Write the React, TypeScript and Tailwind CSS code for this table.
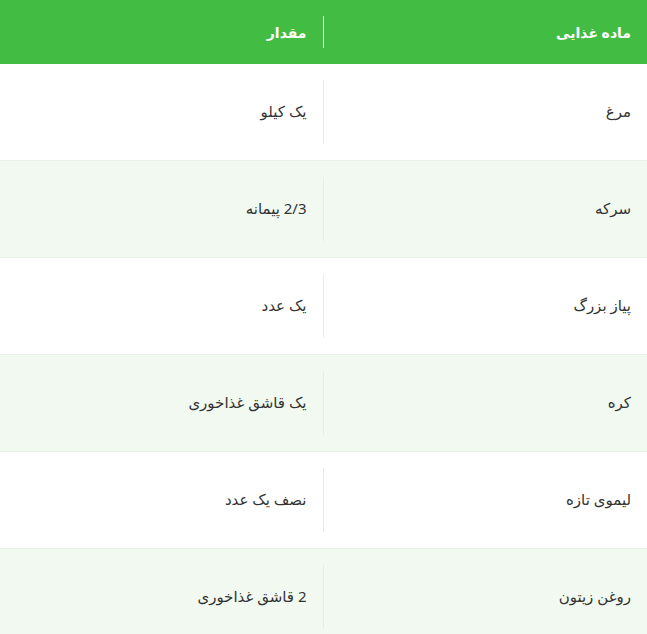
const ROWS = [
  { name: 'مرغ', amount: 'یک کیلو' },
  { name: 'سرکه', amount: '2/3 پیمانه' },
  { name: 'پیاز بزرگ', amount: 'یک عدد' },
  { name: 'کره', amount: 'یک قاشق غذاخوری' },
  { name: 'لیموی تازه', amount: 'نصف یک عدد' },
  { name: 'روغن زیتون', amount: '2 قاشق غذاخوری' },
];

export default function App() {
  return (
    <div dir="rtl" className="w-[647px] bg-white text-[15px] text-[#333]" style={{ fontFamily: '"Noto Sans", "DejaVu Sans", sans-serif' }}>
      <div className="flex bg-[#42bc42] text-[14px] font-bold text-white">
        <div className="w-1/2 py-4">
          <div className="flex h-8 items-center px-4">ماده غذایی</div>
        </div>
        <div className="w-1/2 py-4">
          <div className="flex h-8 items-center border-r border-white px-4">مقدار</div>
        </div>
      </div>
      {ROWS.map((r, i) => (
        <div key={r.name} className={`flex ${i > 0 ? 'border-t border-[#e9f1e9]' : ''} ${i % 2 ? 'bg-[#f1f9f1]' : 'bg-white'}`}>
          <div className="w-1/2 py-4">
            <div className="flex h-16 items-center px-4 pb-0.5">{r.name}</div>
          </div>
          <div className="w-1/2 py-4">
            <div className="flex h-16 items-center border-r border-[#e6ece6] px-4 pb-0.5">{r.amount}</div>
          </div>
        </div>
      ))}
    </div>
  );
}
